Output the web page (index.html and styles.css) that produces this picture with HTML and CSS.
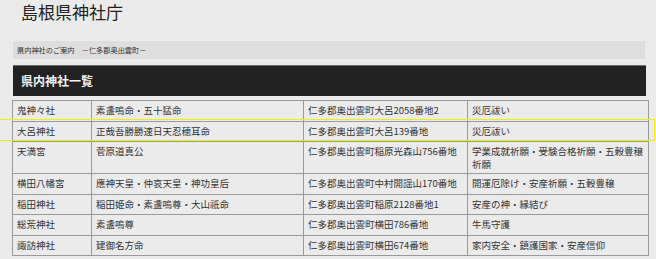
FILE: index.html
```html
<!DOCTYPE html>
<html lang="ja">
<head>
<meta charset="utf-8">
<link rel="stylesheet" href="styles.css">
</head>
<body>
<div class="page">
  <h1 class="title">島根県神社庁</h1>
  <div class="crumb">県内神社のご案内　－仁多郡奥出雲町－</div>
  <div class="head">県内神社一覧</div>
  <table class="list">
    <colgroup>
      <col class="c1"><col class="c2"><col class="c3"><col class="c4">
    </colgroup>
    <tr><td>鬼神々社</td><td>素盞嗚命・五十猛命</td><td>仁多郡奥出雲町大呂2058番地2</td><td>災厄祓い</td></tr>
    <tr><td>大呂神社</td><td>正哉吾勝勝速日天忍穂耳命</td><td>仁多郡奥出雲町大呂139番地</td><td>災厄祓い</td></tr>
    <tr><td>天満宮</td><td>菅原道真公</td><td>仁多郡奥出雲町稲原光森山756番地</td><td>学業成就祈願・受験合格祈願・五穀豊穣祈願</td></tr>
    <tr><td>横田八幡宮</td><td>應神天皇・仲哀天皇・神功皇后</td><td>仁多郡奥出雲町中村開謡山170番地</td><td>開運厄除け・安産祈願・五穀豊穣</td></tr>
    <tr><td>稲田神社</td><td>稲田姫命・素盞嗚尊・大山祇命</td><td>仁多郡奥出雲町稲原2128番地1</td><td>安産の神・縁結び</td></tr>
    <tr><td>総荒神社</td><td>素盞嗚尊</td><td>仁多郡奥出雲町横田786番地</td><td>牛馬守護</td></tr>
    <tr><td>諏訪神社</td><td>建御名方命</td><td>仁多郡奥出雲町横田674番地</td><td>家内安全・鎮護国家・安産信仰</td></tr>
  </table>
</div>
<div class="marker"></div>
</body>
</html>
```
FILE: styles.css
```css
html, body {
  margin: 0;
  padding: 0;
  background: #ebebeb;
  font-family: "Noto Sans CJK JP", "Noto Sans", sans-serif;
  color: #333;
}
body {
  position: relative;
}
.page {
  padding: 0 8px 0 12px;
}
.title {
  margin: 0;
  padding-left: 9px;
  font-size: 17px;
  font-weight: normal;
  line-height: 24px;
  color: #222;
}
.crumb {
  margin: 17px 3px 0 1px;
  height: 18px;
  line-height: 18px;
  background: #dedede;
  font-size: 7.2px;
  padding-left: 4px;
  color: #333;
}
.head {
  margin: 6px 2px 0 1px;
  height: 30px;
  line-height: 30px;
  background: #222;
  border-top: 1px solid #6a6a6a;
  color: #f2f2f2;
  font-size: 12px;
  font-weight: bold;
  padding-left: 8px;
}
.list {
  margin-top: 4px;
  width: 636px;
  border-collapse: collapse;
  table-layout: fixed;
  font-size: 9.5px;
  line-height: 13px;
}
.c1 { width: 79px; }
.c2 { width: 212px; }
.c3 { width: 164px; }
.c4 { width: 181px; }
.list td {
  border: 1px solid #9a9a9a;
  height: 14.5px;
  padding: 3px 4px 2px;
  vertical-align: top;
  color: #333;
}
.marker {
  position: absolute;
  left: -2px;
  top: 119px;
  width: 655px;
  height: 20px;
  border: 1px solid #f0f000;
  pointer-events: none;
}
```
